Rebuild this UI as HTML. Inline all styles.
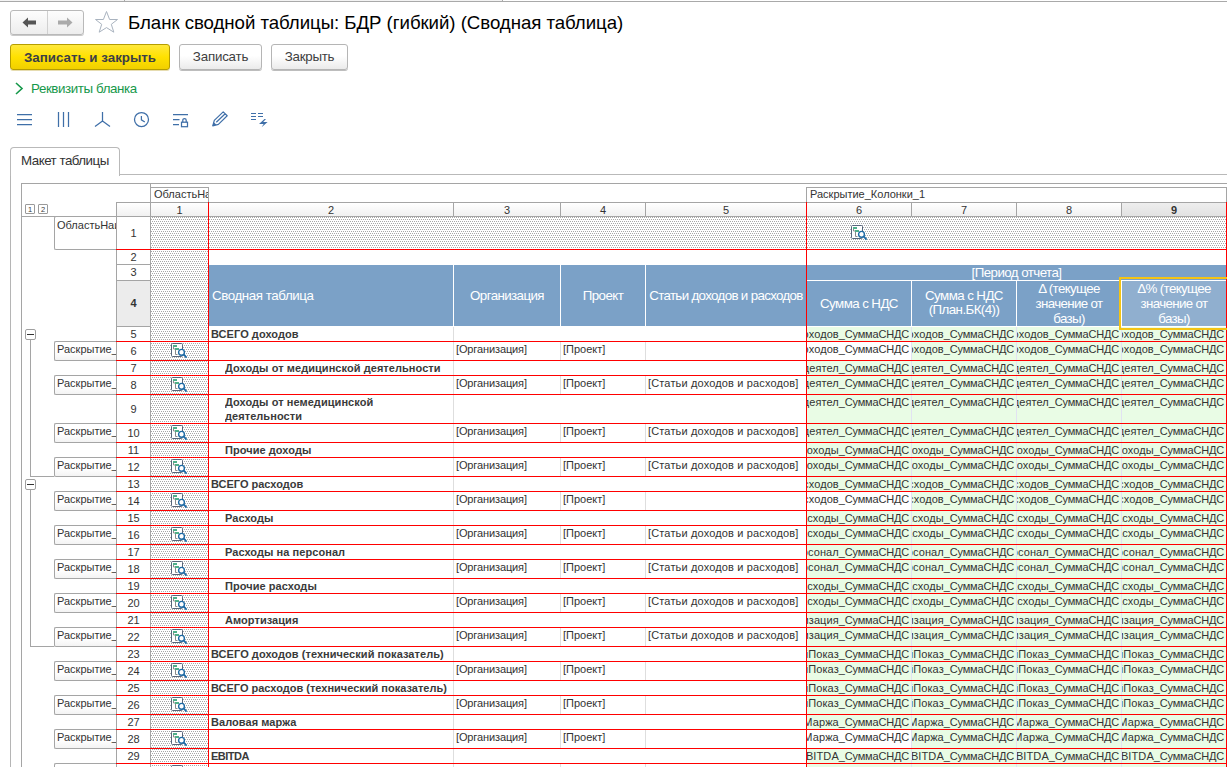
<!DOCTYPE html><html><head><meta charset="utf-8"><style>
html,body{margin:0;padding:0;width:1227px;height:767px;overflow:hidden;background:#fff;}
body{position:relative;font-family:"Liberation Sans", sans-serif;}
.t{position:absolute;white-space:nowrap;overflow:hidden;}
.ab{position:absolute;}
</style></head><body>
<svg class="ab" style="left:0;top:0" width="1227" height="767" shape-rendering="crispEdges"><defs><linearGradient id="hg" x1="0" y1="0" x2="0" y2="1"><stop offset="0" stop-color="#ffffff"/><stop offset="1" stop-color="#f1f1f1"/></linearGradient><linearGradient id="hs" x1="0" y1="0" x2="0" y2="1"><stop offset="0" stop-color="#eeeeee"/><stop offset="1" stop-color="#e2e2e2"/></linearGradient><pattern id="dots" patternUnits="userSpaceOnUse" width="2" height="4"><rect x="0" y="1" width="1" height="1" fill="#a8a8a8"/><rect x="1" y="3" width="1" height="1" fill="#a8a8a8"/></pattern></defs>
<rect x="0" y="0" width="124" height="1" fill="#f3f3f3"/>
<rect x="125" y="0" width="377" height="1" fill="#f3f3f3"/>
<rect x="0" y="1" width="1227" height="1" fill="#a9a9a9"/>
<rect x="124" y="0" width="1" height="1" fill="#a9a9a9"/>
<rect x="502" y="0" width="1" height="1" fill="#a9a9a9"/>
<rect x="151" y="217" width="57" height="550" fill="url(#dots)"/>
<rect x="209" y="217" width="1017" height="32" fill="url(#dots)"/>
<rect x="209" y="265" width="1017" height="61" fill="#7ba1c7"/>
<rect x="453" y="265" width="1" height="61" fill="#ffffff"/>
<rect x="560" y="265" width="1" height="61" fill="#ffffff"/>
<rect x="645" y="265" width="1" height="61" fill="#ffffff"/>
<rect x="807" y="280" width="419" height="1" fill="#ffffff"/>
<rect x="911" y="281" width="1" height="45" fill="#ffffff"/>
<rect x="1016" y="281" width="1" height="45" fill="#ffffff"/>
<rect x="1121" y="281" width="1" height="45" fill="#ffffff"/>
<rect x="1122" y="281" width="104" height="45" fill="#90afcf"/>
<rect x="807" y="327" width="104" height="14" fill="#e9fce5"/>
<rect x="912" y="327" width="104" height="14" fill="#e9fce5"/>
<rect x="1017" y="327" width="104" height="14" fill="#e9fce5"/>
<rect x="1122" y="327" width="104" height="14" fill="#e9fce5"/>
<rect x="912" y="342" width="104" height="18" fill="#e9fce5"/>
<rect x="1017" y="342" width="104" height="18" fill="#e9fce5"/>
<rect x="1122" y="342" width="104" height="18" fill="#e9fce5"/>
<rect x="807" y="361" width="104" height="14" fill="#e9fce5"/>
<rect x="912" y="361" width="104" height="14" fill="#e9fce5"/>
<rect x="1017" y="361" width="104" height="14" fill="#e9fce5"/>
<rect x="1122" y="361" width="104" height="14" fill="#e9fce5"/>
<rect x="807" y="376" width="104" height="18" fill="#e9fce5"/>
<rect x="912" y="376" width="104" height="18" fill="#e9fce5"/>
<rect x="1017" y="376" width="104" height="18" fill="#e9fce5"/>
<rect x="1122" y="376" width="104" height="18" fill="#e9fce5"/>
<rect x="807" y="395" width="104" height="28" fill="#e9fce5"/>
<rect x="912" y="395" width="104" height="28" fill="#e9fce5"/>
<rect x="1017" y="395" width="104" height="28" fill="#e9fce5"/>
<rect x="1122" y="395" width="104" height="28" fill="#e9fce5"/>
<rect x="807" y="424" width="104" height="18" fill="#e9fce5"/>
<rect x="912" y="424" width="104" height="18" fill="#e9fce5"/>
<rect x="1017" y="424" width="104" height="18" fill="#e9fce5"/>
<rect x="1122" y="424" width="104" height="18" fill="#e9fce5"/>
<rect x="807" y="443" width="104" height="14" fill="#e9fce5"/>
<rect x="912" y="443" width="104" height="14" fill="#e9fce5"/>
<rect x="1017" y="443" width="104" height="14" fill="#e9fce5"/>
<rect x="1122" y="443" width="104" height="14" fill="#e9fce5"/>
<rect x="807" y="458" width="104" height="18" fill="#e9fce5"/>
<rect x="912" y="458" width="104" height="18" fill="#e9fce5"/>
<rect x="1017" y="458" width="104" height="18" fill="#e9fce5"/>
<rect x="1122" y="458" width="104" height="18" fill="#e9fce5"/>
<rect x="807" y="477" width="104" height="14" fill="#e9fce5"/>
<rect x="912" y="477" width="104" height="14" fill="#e9fce5"/>
<rect x="1017" y="477" width="104" height="14" fill="#e9fce5"/>
<rect x="1122" y="477" width="104" height="14" fill="#e9fce5"/>
<rect x="912" y="492" width="104" height="18" fill="#e9fce5"/>
<rect x="1017" y="492" width="104" height="18" fill="#e9fce5"/>
<rect x="1122" y="492" width="104" height="18" fill="#e9fce5"/>
<rect x="807" y="511" width="104" height="14" fill="#e9fce5"/>
<rect x="912" y="511" width="104" height="14" fill="#e9fce5"/>
<rect x="1017" y="511" width="104" height="14" fill="#e9fce5"/>
<rect x="1122" y="511" width="104" height="14" fill="#e9fce5"/>
<rect x="807" y="526" width="104" height="18" fill="#e9fce5"/>
<rect x="912" y="526" width="104" height="18" fill="#e9fce5"/>
<rect x="1017" y="526" width="104" height="18" fill="#e9fce5"/>
<rect x="1122" y="526" width="104" height="18" fill="#e9fce5"/>
<rect x="807" y="545" width="104" height="14" fill="#e9fce5"/>
<rect x="912" y="545" width="104" height="14" fill="#e9fce5"/>
<rect x="1017" y="545" width="104" height="14" fill="#e9fce5"/>
<rect x="1122" y="545" width="104" height="14" fill="#e9fce5"/>
<rect x="807" y="560" width="104" height="18" fill="#e9fce5"/>
<rect x="912" y="560" width="104" height="18" fill="#e9fce5"/>
<rect x="1017" y="560" width="104" height="18" fill="#e9fce5"/>
<rect x="1122" y="560" width="104" height="18" fill="#e9fce5"/>
<rect x="807" y="579" width="104" height="14" fill="#e9fce5"/>
<rect x="912" y="579" width="104" height="14" fill="#e9fce5"/>
<rect x="1017" y="579" width="104" height="14" fill="#e9fce5"/>
<rect x="1122" y="579" width="104" height="14" fill="#e9fce5"/>
<rect x="807" y="594" width="104" height="18" fill="#e9fce5"/>
<rect x="912" y="594" width="104" height="18" fill="#e9fce5"/>
<rect x="1017" y="594" width="104" height="18" fill="#e9fce5"/>
<rect x="1122" y="594" width="104" height="18" fill="#e9fce5"/>
<rect x="807" y="613" width="104" height="14" fill="#e9fce5"/>
<rect x="912" y="613" width="104" height="14" fill="#e9fce5"/>
<rect x="1017" y="613" width="104" height="14" fill="#e9fce5"/>
<rect x="1122" y="613" width="104" height="14" fill="#e9fce5"/>
<rect x="807" y="628" width="104" height="18" fill="#e9fce5"/>
<rect x="912" y="628" width="104" height="18" fill="#e9fce5"/>
<rect x="1017" y="628" width="104" height="18" fill="#e9fce5"/>
<rect x="1122" y="628" width="104" height="18" fill="#e9fce5"/>
<rect x="807" y="647" width="104" height="14" fill="#e9fce5"/>
<rect x="912" y="647" width="104" height="14" fill="#e9fce5"/>
<rect x="1017" y="647" width="104" height="14" fill="#e9fce5"/>
<rect x="1122" y="647" width="104" height="14" fill="#e9fce5"/>
<rect x="807" y="662" width="104" height="18" fill="#e9fce5"/>
<rect x="912" y="662" width="104" height="18" fill="#e9fce5"/>
<rect x="1017" y="662" width="104" height="18" fill="#e9fce5"/>
<rect x="1122" y="662" width="104" height="18" fill="#e9fce5"/>
<rect x="807" y="681" width="104" height="14" fill="#e9fce5"/>
<rect x="912" y="681" width="104" height="14" fill="#e9fce5"/>
<rect x="1017" y="681" width="104" height="14" fill="#e9fce5"/>
<rect x="1122" y="681" width="104" height="14" fill="#e9fce5"/>
<rect x="807" y="696" width="104" height="18" fill="#e9fce5"/>
<rect x="912" y="696" width="104" height="18" fill="#e9fce5"/>
<rect x="1017" y="696" width="104" height="18" fill="#e9fce5"/>
<rect x="1122" y="696" width="104" height="18" fill="#e9fce5"/>
<rect x="807" y="715" width="104" height="14" fill="#e9fce5"/>
<rect x="912" y="715" width="104" height="14" fill="#e9fce5"/>
<rect x="1017" y="715" width="104" height="14" fill="#e9fce5"/>
<rect x="1122" y="715" width="104" height="14" fill="#e9fce5"/>
<rect x="912" y="730" width="104" height="18" fill="#e9fce5"/>
<rect x="1017" y="730" width="104" height="18" fill="#e9fce5"/>
<rect x="1122" y="730" width="104" height="18" fill="#e9fce5"/>
<rect x="807" y="749" width="104" height="14" fill="#e9fce5"/>
<rect x="912" y="749" width="104" height="14" fill="#e9fce5"/>
<rect x="1017" y="749" width="104" height="14" fill="#e9fce5"/>
<rect x="1122" y="749" width="104" height="14" fill="#e9fce5"/>
<rect x="807" y="764" width="104" height="18" fill="#e9fce5"/>
<rect x="912" y="764" width="104" height="18" fill="#e9fce5"/>
<rect x="1017" y="764" width="104" height="18" fill="#e9fce5"/>
<rect x="1122" y="764" width="104" height="18" fill="#e9fce5"/>
<rect x="453" y="327" width="1" height="14" fill="#dedede"/>
<rect x="911" y="327" width="1" height="14" fill="#e2e2f2"/>
<rect x="1016" y="327" width="1" height="14" fill="#e2e2f2"/>
<rect x="1121" y="327" width="1" height="14" fill="#e2e2f2"/>
<rect x="453" y="342" width="1" height="18" fill="#dedede"/>
<rect x="560" y="342" width="1" height="18" fill="#dedede"/>
<rect x="645" y="342" width="1" height="18" fill="#dedede"/>
<rect x="911" y="342" width="1" height="18" fill="#e2e2f2"/>
<rect x="1016" y="342" width="1" height="18" fill="#e2e2f2"/>
<rect x="1121" y="342" width="1" height="18" fill="#e2e2f2"/>
<rect x="453" y="361" width="1" height="14" fill="#dedede"/>
<rect x="911" y="361" width="1" height="14" fill="#e2e2f2"/>
<rect x="1016" y="361" width="1" height="14" fill="#e2e2f2"/>
<rect x="1121" y="361" width="1" height="14" fill="#e2e2f2"/>
<rect x="453" y="376" width="1" height="18" fill="#dedede"/>
<rect x="560" y="376" width="1" height="18" fill="#dedede"/>
<rect x="645" y="376" width="1" height="18" fill="#dedede"/>
<rect x="911" y="376" width="1" height="18" fill="#e2e2f2"/>
<rect x="1016" y="376" width="1" height="18" fill="#e2e2f2"/>
<rect x="1121" y="376" width="1" height="18" fill="#e2e2f2"/>
<rect x="453" y="395" width="1" height="28" fill="#dedede"/>
<rect x="911" y="395" width="1" height="28" fill="#e2e2f2"/>
<rect x="1016" y="395" width="1" height="28" fill="#e2e2f2"/>
<rect x="1121" y="395" width="1" height="28" fill="#e2e2f2"/>
<rect x="453" y="424" width="1" height="18" fill="#dedede"/>
<rect x="560" y="424" width="1" height="18" fill="#dedede"/>
<rect x="645" y="424" width="1" height="18" fill="#dedede"/>
<rect x="911" y="424" width="1" height="18" fill="#e2e2f2"/>
<rect x="1016" y="424" width="1" height="18" fill="#e2e2f2"/>
<rect x="1121" y="424" width="1" height="18" fill="#e2e2f2"/>
<rect x="453" y="443" width="1" height="14" fill="#dedede"/>
<rect x="911" y="443" width="1" height="14" fill="#e2e2f2"/>
<rect x="1016" y="443" width="1" height="14" fill="#e2e2f2"/>
<rect x="1121" y="443" width="1" height="14" fill="#e2e2f2"/>
<rect x="453" y="458" width="1" height="18" fill="#dedede"/>
<rect x="560" y="458" width="1" height="18" fill="#dedede"/>
<rect x="645" y="458" width="1" height="18" fill="#dedede"/>
<rect x="911" y="458" width="1" height="18" fill="#e2e2f2"/>
<rect x="1016" y="458" width="1" height="18" fill="#e2e2f2"/>
<rect x="1121" y="458" width="1" height="18" fill="#e2e2f2"/>
<rect x="453" y="477" width="1" height="14" fill="#dedede"/>
<rect x="911" y="477" width="1" height="14" fill="#e2e2f2"/>
<rect x="1016" y="477" width="1" height="14" fill="#e2e2f2"/>
<rect x="1121" y="477" width="1" height="14" fill="#e2e2f2"/>
<rect x="453" y="492" width="1" height="18" fill="#dedede"/>
<rect x="560" y="492" width="1" height="18" fill="#dedede"/>
<rect x="645" y="492" width="1" height="18" fill="#dedede"/>
<rect x="911" y="492" width="1" height="18" fill="#e2e2f2"/>
<rect x="1016" y="492" width="1" height="18" fill="#e2e2f2"/>
<rect x="1121" y="492" width="1" height="18" fill="#e2e2f2"/>
<rect x="453" y="511" width="1" height="14" fill="#dedede"/>
<rect x="911" y="511" width="1" height="14" fill="#e2e2f2"/>
<rect x="1016" y="511" width="1" height="14" fill="#e2e2f2"/>
<rect x="1121" y="511" width="1" height="14" fill="#e2e2f2"/>
<rect x="453" y="526" width="1" height="18" fill="#dedede"/>
<rect x="560" y="526" width="1" height="18" fill="#dedede"/>
<rect x="645" y="526" width="1" height="18" fill="#dedede"/>
<rect x="911" y="526" width="1" height="18" fill="#e2e2f2"/>
<rect x="1016" y="526" width="1" height="18" fill="#e2e2f2"/>
<rect x="1121" y="526" width="1" height="18" fill="#e2e2f2"/>
<rect x="453" y="545" width="1" height="14" fill="#dedede"/>
<rect x="911" y="545" width="1" height="14" fill="#e2e2f2"/>
<rect x="1016" y="545" width="1" height="14" fill="#e2e2f2"/>
<rect x="1121" y="545" width="1" height="14" fill="#e2e2f2"/>
<rect x="453" y="560" width="1" height="18" fill="#dedede"/>
<rect x="560" y="560" width="1" height="18" fill="#dedede"/>
<rect x="645" y="560" width="1" height="18" fill="#dedede"/>
<rect x="911" y="560" width="1" height="18" fill="#e2e2f2"/>
<rect x="1016" y="560" width="1" height="18" fill="#e2e2f2"/>
<rect x="1121" y="560" width="1" height="18" fill="#e2e2f2"/>
<rect x="453" y="579" width="1" height="14" fill="#dedede"/>
<rect x="911" y="579" width="1" height="14" fill="#e2e2f2"/>
<rect x="1016" y="579" width="1" height="14" fill="#e2e2f2"/>
<rect x="1121" y="579" width="1" height="14" fill="#e2e2f2"/>
<rect x="453" y="594" width="1" height="18" fill="#dedede"/>
<rect x="560" y="594" width="1" height="18" fill="#dedede"/>
<rect x="645" y="594" width="1" height="18" fill="#dedede"/>
<rect x="911" y="594" width="1" height="18" fill="#e2e2f2"/>
<rect x="1016" y="594" width="1" height="18" fill="#e2e2f2"/>
<rect x="1121" y="594" width="1" height="18" fill="#e2e2f2"/>
<rect x="453" y="613" width="1" height="14" fill="#dedede"/>
<rect x="911" y="613" width="1" height="14" fill="#e2e2f2"/>
<rect x="1016" y="613" width="1" height="14" fill="#e2e2f2"/>
<rect x="1121" y="613" width="1" height="14" fill="#e2e2f2"/>
<rect x="453" y="628" width="1" height="18" fill="#dedede"/>
<rect x="560" y="628" width="1" height="18" fill="#dedede"/>
<rect x="645" y="628" width="1" height="18" fill="#dedede"/>
<rect x="911" y="628" width="1" height="18" fill="#e2e2f2"/>
<rect x="1016" y="628" width="1" height="18" fill="#e2e2f2"/>
<rect x="1121" y="628" width="1" height="18" fill="#e2e2f2"/>
<rect x="453" y="647" width="1" height="14" fill="#dedede"/>
<rect x="911" y="647" width="1" height="14" fill="#e2e2f2"/>
<rect x="1016" y="647" width="1" height="14" fill="#e2e2f2"/>
<rect x="1121" y="647" width="1" height="14" fill="#e2e2f2"/>
<rect x="453" y="662" width="1" height="18" fill="#dedede"/>
<rect x="560" y="662" width="1" height="18" fill="#dedede"/>
<rect x="645" y="662" width="1" height="18" fill="#dedede"/>
<rect x="911" y="662" width="1" height="18" fill="#e2e2f2"/>
<rect x="1016" y="662" width="1" height="18" fill="#e2e2f2"/>
<rect x="1121" y="662" width="1" height="18" fill="#e2e2f2"/>
<rect x="453" y="681" width="1" height="14" fill="#dedede"/>
<rect x="911" y="681" width="1" height="14" fill="#e2e2f2"/>
<rect x="1016" y="681" width="1" height="14" fill="#e2e2f2"/>
<rect x="1121" y="681" width="1" height="14" fill="#e2e2f2"/>
<rect x="453" y="696" width="1" height="18" fill="#dedede"/>
<rect x="560" y="696" width="1" height="18" fill="#dedede"/>
<rect x="645" y="696" width="1" height="18" fill="#dedede"/>
<rect x="911" y="696" width="1" height="18" fill="#e2e2f2"/>
<rect x="1016" y="696" width="1" height="18" fill="#e2e2f2"/>
<rect x="1121" y="696" width="1" height="18" fill="#e2e2f2"/>
<rect x="453" y="715" width="1" height="14" fill="#dedede"/>
<rect x="911" y="715" width="1" height="14" fill="#e2e2f2"/>
<rect x="1016" y="715" width="1" height="14" fill="#e2e2f2"/>
<rect x="1121" y="715" width="1" height="14" fill="#e2e2f2"/>
<rect x="453" y="730" width="1" height="18" fill="#dedede"/>
<rect x="560" y="730" width="1" height="18" fill="#dedede"/>
<rect x="645" y="730" width="1" height="18" fill="#dedede"/>
<rect x="911" y="730" width="1" height="18" fill="#e2e2f2"/>
<rect x="1016" y="730" width="1" height="18" fill="#e2e2f2"/>
<rect x="1121" y="730" width="1" height="18" fill="#e2e2f2"/>
<rect x="453" y="749" width="1" height="14" fill="#dedede"/>
<rect x="911" y="749" width="1" height="14" fill="#e2e2f2"/>
<rect x="1016" y="749" width="1" height="14" fill="#e2e2f2"/>
<rect x="1121" y="749" width="1" height="14" fill="#e2e2f2"/>
<rect x="453" y="764" width="1" height="18" fill="#dedede"/>
<rect x="560" y="764" width="1" height="18" fill="#dedede"/>
<rect x="645" y="764" width="1" height="18" fill="#dedede"/>
<rect x="911" y="764" width="1" height="18" fill="#e2e2f2"/>
<rect x="1016" y="764" width="1" height="18" fill="#e2e2f2"/>
<rect x="1121" y="764" width="1" height="18" fill="#e2e2f2"/>
<rect x="117" y="203" width="1109" height="13" fill="url(#hg)"/>
<rect x="1122" y="203" width="104" height="13" fill="url(#hs)"/>
<rect x="116" y="202" width="1110" height="1" fill="#a5a5a5"/>
<rect x="21" y="216" width="1205" height="1" fill="#a5a5a5"/>
<rect x="116" y="202" width="1" height="15" fill="#a5a5a5"/>
<rect x="150" y="202" width="1" height="15" fill="#a5a5a5"/>
<rect x="208" y="202" width="1" height="15" fill="#a5a5a5"/>
<rect x="453" y="202" width="1" height="15" fill="#a5a5a5"/>
<rect x="560" y="202" width="1" height="15" fill="#a5a5a5"/>
<rect x="645" y="202" width="1" height="15" fill="#a5a5a5"/>
<rect x="806" y="202" width="1" height="15" fill="#a5a5a5"/>
<rect x="911" y="202" width="1" height="15" fill="#a5a5a5"/>
<rect x="1016" y="202" width="1" height="15" fill="#a5a5a5"/>
<rect x="1121" y="202" width="1" height="15" fill="#a5a5a5"/>
<rect x="1226" y="187" width="1" height="15" fill="#a5a5a5"/>
<rect x="117" y="281" width="33" height="45" fill="#ececec"/>
<rect x="116" y="202" width="1" height="565" fill="#a5a5a5"/>
<rect x="150" y="183" width="1" height="584" fill="#a5a5a5"/>
<rect x="116" y="249" width="34" height="1" fill="#a5a5a5"/>
<rect x="116" y="264" width="34" height="1" fill="#a5a5a5"/>
<rect x="116" y="280" width="34" height="1" fill="#a5a5a5"/>
<rect x="116" y="326" width="34" height="1" fill="#a5a5a5"/>
<rect x="116" y="341" width="34" height="1" fill="#a5a5a5"/>
<rect x="116" y="360" width="34" height="1" fill="#a5a5a5"/>
<rect x="116" y="375" width="34" height="1" fill="#a5a5a5"/>
<rect x="116" y="394" width="34" height="1" fill="#a5a5a5"/>
<rect x="116" y="423" width="34" height="1" fill="#a5a5a5"/>
<rect x="116" y="442" width="34" height="1" fill="#a5a5a5"/>
<rect x="116" y="457" width="34" height="1" fill="#a5a5a5"/>
<rect x="116" y="476" width="34" height="1" fill="#a5a5a5"/>
<rect x="116" y="491" width="34" height="1" fill="#a5a5a5"/>
<rect x="116" y="510" width="34" height="1" fill="#a5a5a5"/>
<rect x="116" y="525" width="34" height="1" fill="#a5a5a5"/>
<rect x="116" y="544" width="34" height="1" fill="#a5a5a5"/>
<rect x="116" y="559" width="34" height="1" fill="#a5a5a5"/>
<rect x="116" y="578" width="34" height="1" fill="#a5a5a5"/>
<rect x="116" y="593" width="34" height="1" fill="#a5a5a5"/>
<rect x="116" y="612" width="34" height="1" fill="#a5a5a5"/>
<rect x="116" y="627" width="34" height="1" fill="#a5a5a5"/>
<rect x="116" y="646" width="34" height="1" fill="#a5a5a5"/>
<rect x="116" y="661" width="34" height="1" fill="#a5a5a5"/>
<rect x="116" y="680" width="34" height="1" fill="#a5a5a5"/>
<rect x="116" y="695" width="34" height="1" fill="#a5a5a5"/>
<rect x="116" y="714" width="34" height="1" fill="#a5a5a5"/>
<rect x="116" y="729" width="34" height="1" fill="#a5a5a5"/>
<rect x="116" y="748" width="34" height="1" fill="#a5a5a5"/>
<rect x="116" y="763" width="34" height="1" fill="#a5a5a5"/>
<rect x="116" y="782" width="34" height="1" fill="#a5a5a5"/>
<rect x="21" y="183" width="1206" height="1" fill="#a5a5a5"/>
<rect x="150" y="187" width="59" height="1" fill="#a5a5a5"/>
<rect x="208" y="187" width="1" height="15" fill="#a5a5a5"/>
<rect x="806" y="187" width="421" height="1" fill="#a5a5a5"/>
<rect x="806" y="187" width="1" height="15" fill="#a5a5a5"/>
<rect x="21" y="183" width="1" height="584" fill="#a5a5a5"/>
<rect x="10" y="160" width="1" height="607" fill="#b5b5b5"/>
<rect x="208" y="202" width="1" height="565" fill="#ff0000"/>
<rect x="806" y="202" width="1" height="565" fill="#ff0000"/>
<rect x="1226" y="202" width="1" height="565" fill="#ff0000"/>
<rect x="116" y="249" width="1111" height="1" fill="#ff0000"/>
<rect x="116" y="341" width="1111" height="1" fill="#ff0000"/>
<rect x="116" y="360" width="1111" height="1" fill="#ff0000"/>
<rect x="116" y="375" width="1111" height="1" fill="#ff0000"/>
<rect x="116" y="394" width="1111" height="1" fill="#ff0000"/>
<rect x="116" y="423" width="1111" height="1" fill="#ff0000"/>
<rect x="116" y="442" width="1111" height="1" fill="#ff0000"/>
<rect x="116" y="457" width="1111" height="1" fill="#ff0000"/>
<rect x="116" y="476" width="1111" height="1" fill="#ff0000"/>
<rect x="116" y="491" width="1111" height="1" fill="#ff0000"/>
<rect x="116" y="510" width="1111" height="1" fill="#ff0000"/>
<rect x="116" y="525" width="1111" height="1" fill="#ff0000"/>
<rect x="116" y="544" width="1111" height="1" fill="#ff0000"/>
<rect x="116" y="559" width="1111" height="1" fill="#ff0000"/>
<rect x="116" y="578" width="1111" height="1" fill="#ff0000"/>
<rect x="116" y="593" width="1111" height="1" fill="#ff0000"/>
<rect x="116" y="612" width="1111" height="1" fill="#ff0000"/>
<rect x="116" y="627" width="1111" height="1" fill="#ff0000"/>
<rect x="116" y="646" width="1111" height="1" fill="#ff0000"/>
<rect x="116" y="661" width="1111" height="1" fill="#ff0000"/>
<rect x="116" y="680" width="1111" height="1" fill="#ff0000"/>
<rect x="116" y="695" width="1111" height="1" fill="#ff0000"/>
<rect x="116" y="714" width="1111" height="1" fill="#ff0000"/>
<rect x="116" y="729" width="1111" height="1" fill="#ff0000"/>
<rect x="116" y="748" width="1111" height="1" fill="#ff0000"/>
<rect x="116" y="763" width="1111" height="1" fill="#ff0000"/>
<rect x="116" y="782" width="1111" height="1" fill="#ff0000"/>
<rect x="30" y="340" width="1" height="136" fill="#a5a5a5"/>
<rect x="30" y="476" width="24" height="1" fill="#a5a5a5"/>
<rect x="30" y="490" width="1" height="156" fill="#a5a5a5"/>
<rect x="30" y="646" width="24" height="1" fill="#a5a5a5"/>
</svg>
<div class="ab" style="left:54px;top:216px;width:61px;height:32px;border:1px solid #a5a5a5;border-right:none;border-radius:2px 0 0 2px;background:#fff"></div>
<div class="ab" style="left:54px;top:341px;width:61px;height:18px;border:1px solid #a5a5a5;border-right:none;border-radius:2px 0 0 2px;background:linear-gradient(#fff 55%,#f3f3f3)"></div>
<div class="ab" style="left:54px;top:375px;width:61px;height:18px;border:1px solid #a5a5a5;border-right:none;border-radius:2px 0 0 2px;background:linear-gradient(#fff 55%,#f3f3f3)"></div>
<div class="ab" style="left:54px;top:423px;width:61px;height:18px;border:1px solid #a5a5a5;border-right:none;border-radius:2px 0 0 2px;background:linear-gradient(#fff 55%,#f3f3f3)"></div>
<div class="ab" style="left:54px;top:457px;width:61px;height:18px;border:1px solid #a5a5a5;border-right:none;border-radius:2px 0 0 2px;background:linear-gradient(#fff 55%,#f3f3f3)"></div>
<div class="ab" style="left:54px;top:491px;width:61px;height:18px;border:1px solid #a5a5a5;border-right:none;border-radius:2px 0 0 2px;background:linear-gradient(#fff 55%,#f3f3f3)"></div>
<div class="ab" style="left:54px;top:525px;width:61px;height:18px;border:1px solid #a5a5a5;border-right:none;border-radius:2px 0 0 2px;background:linear-gradient(#fff 55%,#f3f3f3)"></div>
<div class="ab" style="left:54px;top:559px;width:61px;height:18px;border:1px solid #a5a5a5;border-right:none;border-radius:2px 0 0 2px;background:linear-gradient(#fff 55%,#f3f3f3)"></div>
<div class="ab" style="left:54px;top:593px;width:61px;height:18px;border:1px solid #a5a5a5;border-right:none;border-radius:2px 0 0 2px;background:linear-gradient(#fff 55%,#f3f3f3)"></div>
<div class="ab" style="left:54px;top:627px;width:61px;height:18px;border:1px solid #a5a5a5;border-right:none;border-radius:2px 0 0 2px;background:linear-gradient(#fff 55%,#f3f3f3)"></div>
<div class="ab" style="left:54px;top:661px;width:61px;height:18px;border:1px solid #a5a5a5;border-right:none;border-radius:2px 0 0 2px;background:linear-gradient(#fff 55%,#f3f3f3)"></div>
<div class="ab" style="left:54px;top:695px;width:61px;height:18px;border:1px solid #a5a5a5;border-right:none;border-radius:2px 0 0 2px;background:linear-gradient(#fff 55%,#f3f3f3)"></div>
<div class="ab" style="left:54px;top:729px;width:61px;height:18px;border:1px solid #a5a5a5;border-right:none;border-radius:2px 0 0 2px;background:linear-gradient(#fff 55%,#f3f3f3)"></div>
<div class="ab" style="left:54px;top:763px;width:61px;height:18px;border:1px solid #a5a5a5;border-right:none;border-radius:2px 0 0 2px;background:linear-gradient(#fff 55%,#f3f3f3)"></div>
<div class="ab" style="left:10px;top:10px;width:72px;height:23px;border:1px solid #b9b9b9;border-radius:3px;background:linear-gradient(#fdfdfd,#ededed);box-shadow:0 1px 0 #c9c9c9"></div>
<div class="ab" style="left:47px;top:11px;width:1px;height:23px;background:#d0d0d0"></div>
<svg class="ab" style="left:20px;top:14px" width="20" height="16"><path d="M2.5 8.5 L8 3.5 L8 6.5 L16 6.5 L16 10.5 L8 10.5 L8 13.5 Z" fill="#555"/></svg>
<svg class="ab" style="left:55px;top:14px" width="20" height="16"><path d="M17.5 8.5 L12 3.5 L12 6.5 L3 6.5 L3 10.5 L12 10.5 L12 13.5 Z" fill="#aaa"/></svg>
<svg class="ab" style="left:94px;top:10px" width="26" height="24"><path d="M12.5 1.5 L15.6 9.5 L23.5 9.5 L17.3 14.3 L19.8 22.2 L12.5 17.6 L5.2 22.2 L7.7 14.3 L1.5 9.5 L9.4 9.5 Z" fill="none" stroke="#a9b3bf" stroke-width="1"/></svg>
<div class="t" style="left:128px;top:11px;width:520px;height:24px;font-size:18.67px;line-height:24px;color:#000;font-weight:400;text-align:left;letter-spacing:-0.05px;">Бланк сводной таблицы: БДР (гибкий) (Сводная таблица)</div>
<div class="ab" style="left:10px;top:44px;width:158px;height:24px;border:1px solid #b59d00;border-radius:3px;background:linear-gradient(#ffe83c,#ffe100 50%,#f1d000);box-shadow:0 1px 0 #e6dcb0"></div>
<div class="t" style="left:11px;top:46px;width:158px;height:24px;font-size:13.33px;line-height:24px;color:#3b3e48;font-weight:700;text-align:center;letter-spacing:0px;">Записать и закрыть</div>
<div class="ab" style="left:179px;top:44px;width:81px;height:24px;border:1px solid #b5b5b5;border-radius:3px;background:linear-gradient(#ffffff 45%,#ebebeb);box-shadow:0 1px 0 #bdbdbd"></div>
<div class="t" style="left:180px;top:45px;width:81px;height:24px;font-size:13.33px;line-height:24px;color:#404040;font-weight:400;text-align:center;letter-spacing:-0.2px;">Записать</div>
<div class="ab" style="left:271px;top:44px;width:75px;height:24px;border:1px solid #b5b5b5;border-radius:3px;background:linear-gradient(#ffffff 45%,#ebebeb);box-shadow:0 1px 0 #bdbdbd"></div>
<div class="t" style="left:272px;top:45px;width:75px;height:24px;font-size:13.33px;line-height:24px;color:#404040;font-weight:400;text-align:center;letter-spacing:-0.25px;">Закрыть</div>
<svg class="ab" style="left:13px;top:81px" width="12" height="15"><path d="M3 2 L9 7.5 L3 13" fill="none" stroke="#16984a" stroke-width="1.6"/></svg>
<div class="t" style="left:31px;top:80px;width:130px;height:17px;font-size:13.33px;line-height:17px;color:#16984a;font-weight:400;text-align:left;letter-spacing:-0.4px;">Реквизиты бланка</div>
<svg class="ab" style="left:0;top:100px" width="300" height="40" fill="none" stroke="#3f6fa8" stroke-width="1.25"><path d="M17 14.5 H32 M17 19.5 H32 M17 24.5 H32"/><path d="M58.5 12 V27 M63.5 12 V27 M68.5 12 V27"/><path d="M102.5 12 V21 M102.5 21 L95 26.5 M102.5 21 L110 26.5"/><circle cx="141.5" cy="19.5" r="7"/><path d="M141.4 16 V19.8 L144.8 22"/><path d="M173 14.5 H188 M173 19.5 H179.5 M173 24.5 H179"/><rect x="181.5" y="22.2" width="6" height="4.5"/><path d="M182.8 22.2 V20.2 A1.7 1.7 0 0 1 186.2 20.2 V22.2"/><path d="M212.8 25.8 L214.3 20.4 L223.2 11.9 L227.2 15.8 L218.4 24.4 Z M216.3 22.3 L225.2 13.8" stroke-width="1.2" stroke-linejoin="round"/><path d="M212.5 26 L213.6 22 L216.5 24.8 Z" fill="#3f6fa8" stroke="none"/><path d="M251 13.5 H256 M258 13.5 H263 M251 16.5 H256 M258 16.5 H263 M251 19.5 H256" stroke-width="1.1"/><path d="M264.5 119 L259 124 L263.6 124 L261.6 127.3 L267.6 122 L263.2 122 L266 119 Z" transform="translate(0,-100)" fill="#3f6fa8" stroke="none"/></svg>
<div class="ab" style="left:10px;top:147px;width:108px;height:28px;border:1px solid #b9b9b9;border-bottom:none;border-radius:4px 4px 0 0;background:#fff"></div>
<div class="ab" style="left:119px;top:174px;width:1108px;height:1px;background:#b9b9b9"></div>
<div class="t" style="left:21px;top:152px;width:97px;height:18px;font-size:13.33px;line-height:18px;color:#333;font-weight:400;text-align:left;letter-spacing:-0.5px;">Макет таблицы</div>
<div class="t" style="left:154px;top:187px;width:54px;height:14px;font-size:11px;line-height:14px;color:#333;font-weight:400;text-align:left;letter-spacing:0px;">ОбластьНаименованиеСтрок</div>
<div class="t" style="left:810px;top:187px;width:416px;height:14px;font-size:11px;line-height:14px;color:#333;font-weight:400;text-align:left;letter-spacing:0px;">Раскрытие_Колонки_1</div>
<div class="t" style="left:151px;top:204px;width:57px;height:13px;font-size:11px;line-height:13px;color:#333;font-weight:400;text-align:center;letter-spacing:0px;">1</div>
<div class="t" style="left:209px;top:204px;width:244px;height:13px;font-size:11px;line-height:13px;color:#333;font-weight:400;text-align:center;letter-spacing:0px;">2</div>
<div class="t" style="left:454px;top:204px;width:106px;height:13px;font-size:11px;line-height:13px;color:#333;font-weight:400;text-align:center;letter-spacing:0px;">3</div>
<div class="t" style="left:561px;top:204px;width:84px;height:13px;font-size:11px;line-height:13px;color:#333;font-weight:400;text-align:center;letter-spacing:0px;">4</div>
<div class="t" style="left:646px;top:204px;width:160px;height:13px;font-size:11px;line-height:13px;color:#333;font-weight:400;text-align:center;letter-spacing:0px;">5</div>
<div class="t" style="left:807px;top:204px;width:104px;height:13px;font-size:11px;line-height:13px;color:#333;font-weight:400;text-align:center;letter-spacing:0px;">6</div>
<div class="t" style="left:912px;top:204px;width:104px;height:13px;font-size:11px;line-height:13px;color:#333;font-weight:400;text-align:center;letter-spacing:0px;">7</div>
<div class="t" style="left:1017px;top:204px;width:104px;height:13px;font-size:11px;line-height:13px;color:#333;font-weight:400;text-align:center;letter-spacing:0px;">8</div>
<div class="t" style="left:1122px;top:204px;width:104px;height:13px;font-size:11px;line-height:13px;color:#333;font-weight:700;text-align:center;letter-spacing:0px;">9</div>
<div class="t" style="left:57px;top:218px;width:59px;height:16px;font-size:11px;line-height:14px;color:#333;font-weight:400;text-align:left;letter-spacing:0px;">ОбластьНаименованиеСтрок</div>
<div class="t" style="left:117px;top:217px;width:33px;height:32px;font-size:11px;line-height:32px;color:#333;font-weight:400;text-align:center;letter-spacing:0px;">1</div>
<div class="t" style="left:117px;top:250px;width:33px;height:14px;font-size:11px;line-height:14px;color:#333;font-weight:400;text-align:center;letter-spacing:0px;">2</div>
<div class="t" style="left:117px;top:265px;width:33px;height:15px;font-size:11px;line-height:15px;color:#333;font-weight:400;text-align:center;letter-spacing:0px;">3</div>
<div class="t" style="left:117px;top:281px;width:33px;height:45px;font-size:11px;line-height:45px;color:#333;font-weight:700;text-align:center;letter-spacing:0px;">4</div>
<div class="t" style="left:117px;top:327px;width:33px;height:14px;font-size:11px;line-height:14px;color:#333;font-weight:400;text-align:center;letter-spacing:0px;">5</div>
<div class="t" style="left:117px;top:342px;width:33px;height:18px;font-size:11px;line-height:18px;color:#333;font-weight:400;text-align:center;letter-spacing:0px;">6</div>
<div class="t" style="left:117px;top:361px;width:33px;height:14px;font-size:11px;line-height:14px;color:#333;font-weight:400;text-align:center;letter-spacing:0px;">7</div>
<div class="t" style="left:117px;top:376px;width:33px;height:18px;font-size:11px;line-height:18px;color:#333;font-weight:400;text-align:center;letter-spacing:0px;">8</div>
<div class="t" style="left:117px;top:395px;width:33px;height:28px;font-size:11px;line-height:28px;color:#333;font-weight:400;text-align:center;letter-spacing:0px;">9</div>
<div class="t" style="left:117px;top:424px;width:33px;height:18px;font-size:11px;line-height:18px;color:#333;font-weight:400;text-align:center;letter-spacing:0px;">10</div>
<div class="t" style="left:117px;top:443px;width:33px;height:14px;font-size:11px;line-height:14px;color:#333;font-weight:400;text-align:center;letter-spacing:0px;">11</div>
<div class="t" style="left:117px;top:458px;width:33px;height:18px;font-size:11px;line-height:18px;color:#333;font-weight:400;text-align:center;letter-spacing:0px;">12</div>
<div class="t" style="left:117px;top:477px;width:33px;height:14px;font-size:11px;line-height:14px;color:#333;font-weight:400;text-align:center;letter-spacing:0px;">13</div>
<div class="t" style="left:117px;top:492px;width:33px;height:18px;font-size:11px;line-height:18px;color:#333;font-weight:400;text-align:center;letter-spacing:0px;">14</div>
<div class="t" style="left:117px;top:511px;width:33px;height:14px;font-size:11px;line-height:14px;color:#333;font-weight:400;text-align:center;letter-spacing:0px;">15</div>
<div class="t" style="left:117px;top:526px;width:33px;height:18px;font-size:11px;line-height:18px;color:#333;font-weight:400;text-align:center;letter-spacing:0px;">16</div>
<div class="t" style="left:117px;top:545px;width:33px;height:14px;font-size:11px;line-height:14px;color:#333;font-weight:400;text-align:center;letter-spacing:0px;">17</div>
<div class="t" style="left:117px;top:560px;width:33px;height:18px;font-size:11px;line-height:18px;color:#333;font-weight:400;text-align:center;letter-spacing:0px;">18</div>
<div class="t" style="left:117px;top:579px;width:33px;height:14px;font-size:11px;line-height:14px;color:#333;font-weight:400;text-align:center;letter-spacing:0px;">19</div>
<div class="t" style="left:117px;top:594px;width:33px;height:18px;font-size:11px;line-height:18px;color:#333;font-weight:400;text-align:center;letter-spacing:0px;">20</div>
<div class="t" style="left:117px;top:613px;width:33px;height:14px;font-size:11px;line-height:14px;color:#333;font-weight:400;text-align:center;letter-spacing:0px;">21</div>
<div class="t" style="left:117px;top:628px;width:33px;height:18px;font-size:11px;line-height:18px;color:#333;font-weight:400;text-align:center;letter-spacing:0px;">22</div>
<div class="t" style="left:117px;top:647px;width:33px;height:14px;font-size:11px;line-height:14px;color:#333;font-weight:400;text-align:center;letter-spacing:0px;">23</div>
<div class="t" style="left:117px;top:662px;width:33px;height:18px;font-size:11px;line-height:18px;color:#333;font-weight:400;text-align:center;letter-spacing:0px;">24</div>
<div class="t" style="left:117px;top:681px;width:33px;height:14px;font-size:11px;line-height:14px;color:#333;font-weight:400;text-align:center;letter-spacing:0px;">25</div>
<div class="t" style="left:117px;top:696px;width:33px;height:18px;font-size:11px;line-height:18px;color:#333;font-weight:400;text-align:center;letter-spacing:0px;">26</div>
<div class="t" style="left:117px;top:715px;width:33px;height:14px;font-size:11px;line-height:14px;color:#333;font-weight:400;text-align:center;letter-spacing:0px;">27</div>
<div class="t" style="left:117px;top:730px;width:33px;height:18px;font-size:11px;line-height:18px;color:#333;font-weight:400;text-align:center;letter-spacing:0px;">28</div>
<div class="t" style="left:117px;top:749px;width:33px;height:14px;font-size:11px;line-height:14px;color:#333;font-weight:400;text-align:center;letter-spacing:0px;">29</div>
<div class="t" style="left:117px;top:764px;width:33px;height:18px;font-size:11px;line-height:18px;color:#333;font-weight:400;text-align:center;letter-spacing:0px;">30</div>
<div class="ab" style="left:25px;top:204px;width:8px;height:8px;border:1px solid #9a9a9a;border-radius:1px"></div>
<div class="ab" style="left:38px;top:204px;width:8px;height:8px;border:1px solid #9a9a9a;border-radius:1px"></div>
<div class="t" style="left:25px;top:205px;width:10px;height:10px;font-size:7.5px;line-height:10px;color:#3a3a3a;font-weight:400;text-align:center;letter-spacing:0px;">1</div>
<div class="t" style="left:38px;top:205px;width:10px;height:10px;font-size:7.5px;line-height:10px;color:#3a3a3a;font-weight:400;text-align:center;letter-spacing:0px;">2</div>
<div class="ab" style="left:25px;top:329px;width:9px;height:9px;border:1px solid #a0a0a0;border-radius:2px;background:#fff"></div>
<div class="ab" style="left:27px;top:334px;width:7px;height:1px;background:#333"></div>
<div class="ab" style="left:25px;top:479px;width:9px;height:9px;border:1px solid #a0a0a0;border-radius:2px;background:#fff"></div>
<div class="ab" style="left:27px;top:484px;width:7px;height:1px;background:#333"></div>
<div class="t" style="left:57px;top:342px;width:59px;height:18px;font-size:11px;line-height:14px;color:#333;font-weight:400;text-align:left;letter-spacing:0px;">Раскрытие_Строки</div>
<div class="t" style="left:57px;top:376px;width:59px;height:18px;font-size:11px;line-height:14px;color:#333;font-weight:400;text-align:left;letter-spacing:0px;">Раскрытие_Строки</div>
<div class="t" style="left:57px;top:424px;width:59px;height:18px;font-size:11px;line-height:14px;color:#333;font-weight:400;text-align:left;letter-spacing:0px;">Раскрытие_Строки</div>
<div class="t" style="left:57px;top:458px;width:59px;height:18px;font-size:11px;line-height:14px;color:#333;font-weight:400;text-align:left;letter-spacing:0px;">Раскрытие_Строки</div>
<div class="t" style="left:57px;top:492px;width:59px;height:18px;font-size:11px;line-height:14px;color:#333;font-weight:400;text-align:left;letter-spacing:0px;">Раскрытие_Строки</div>
<div class="t" style="left:57px;top:526px;width:59px;height:18px;font-size:11px;line-height:14px;color:#333;font-weight:400;text-align:left;letter-spacing:0px;">Раскрытие_Строки</div>
<div class="t" style="left:57px;top:560px;width:59px;height:18px;font-size:11px;line-height:14px;color:#333;font-weight:400;text-align:left;letter-spacing:0px;">Раскрытие_Строки</div>
<div class="t" style="left:57px;top:594px;width:59px;height:18px;font-size:11px;line-height:14px;color:#333;font-weight:400;text-align:left;letter-spacing:0px;">Раскрытие_Строки</div>
<div class="t" style="left:57px;top:628px;width:59px;height:18px;font-size:11px;line-height:14px;color:#333;font-weight:400;text-align:left;letter-spacing:0px;">Раскрытие_Строки</div>
<div class="t" style="left:57px;top:662px;width:59px;height:18px;font-size:11px;line-height:14px;color:#333;font-weight:400;text-align:left;letter-spacing:0px;">Раскрытие_Строки</div>
<div class="t" style="left:57px;top:696px;width:59px;height:18px;font-size:11px;line-height:14px;color:#333;font-weight:400;text-align:left;letter-spacing:0px;">Раскрытие_Строки</div>
<div class="t" style="left:57px;top:730px;width:59px;height:18px;font-size:11px;line-height:14px;color:#333;font-weight:400;text-align:left;letter-spacing:0px;">Раскрытие_Строки</div>
<div class="t" style="left:57px;top:764px;width:59px;height:18px;font-size:11px;line-height:14px;color:#333;font-weight:400;text-align:left;letter-spacing:0px;">Раскрытие_Строки</div>
<svg class="ab" style="left:170px;top:343px" width="18" height="17"><rect x="1.5" y="0.5" width="11" height="13" rx="1" fill="#fff" stroke="#56657a" stroke-width="1"/><rect x="3" y="2" width="4" height="2" fill="#4fb08a"/><rect x="5" y="5" width="4" height="2" fill="#4fb08a"/><path d="M3.5 4 V6 H5 M5.5 7 V11.5 H7.5" fill="none" stroke="#8a8a8a" stroke-width="1"/><circle cx="11.5" cy="9.3" r="2.9" fill="#fff" stroke="#1d6aa5" stroke-width="1.4"/><path d="M13.6 11.4 L16.6 14.6" stroke="#1d6aa5" stroke-width="1.8"/></svg>
<svg class="ab" style="left:170px;top:377px" width="18" height="17"><rect x="1.5" y="0.5" width="11" height="13" rx="1" fill="#fff" stroke="#56657a" stroke-width="1"/><rect x="3" y="2" width="4" height="2" fill="#4fb08a"/><rect x="5" y="5" width="4" height="2" fill="#4fb08a"/><path d="M3.5 4 V6 H5 M5.5 7 V11.5 H7.5" fill="none" stroke="#8a8a8a" stroke-width="1"/><circle cx="11.5" cy="9.3" r="2.9" fill="#fff" stroke="#1d6aa5" stroke-width="1.4"/><path d="M13.6 11.4 L16.6 14.6" stroke="#1d6aa5" stroke-width="1.8"/></svg>
<svg class="ab" style="left:170px;top:425px" width="18" height="17"><rect x="1.5" y="0.5" width="11" height="13" rx="1" fill="#fff" stroke="#56657a" stroke-width="1"/><rect x="3" y="2" width="4" height="2" fill="#4fb08a"/><rect x="5" y="5" width="4" height="2" fill="#4fb08a"/><path d="M3.5 4 V6 H5 M5.5 7 V11.5 H7.5" fill="none" stroke="#8a8a8a" stroke-width="1"/><circle cx="11.5" cy="9.3" r="2.9" fill="#fff" stroke="#1d6aa5" stroke-width="1.4"/><path d="M13.6 11.4 L16.6 14.6" stroke="#1d6aa5" stroke-width="1.8"/></svg>
<svg class="ab" style="left:170px;top:459px" width="18" height="17"><rect x="1.5" y="0.5" width="11" height="13" rx="1" fill="#fff" stroke="#56657a" stroke-width="1"/><rect x="3" y="2" width="4" height="2" fill="#4fb08a"/><rect x="5" y="5" width="4" height="2" fill="#4fb08a"/><path d="M3.5 4 V6 H5 M5.5 7 V11.5 H7.5" fill="none" stroke="#8a8a8a" stroke-width="1"/><circle cx="11.5" cy="9.3" r="2.9" fill="#fff" stroke="#1d6aa5" stroke-width="1.4"/><path d="M13.6 11.4 L16.6 14.6" stroke="#1d6aa5" stroke-width="1.8"/></svg>
<svg class="ab" style="left:170px;top:493px" width="18" height="17"><rect x="1.5" y="0.5" width="11" height="13" rx="1" fill="#fff" stroke="#56657a" stroke-width="1"/><rect x="3" y="2" width="4" height="2" fill="#4fb08a"/><rect x="5" y="5" width="4" height="2" fill="#4fb08a"/><path d="M3.5 4 V6 H5 M5.5 7 V11.5 H7.5" fill="none" stroke="#8a8a8a" stroke-width="1"/><circle cx="11.5" cy="9.3" r="2.9" fill="#fff" stroke="#1d6aa5" stroke-width="1.4"/><path d="M13.6 11.4 L16.6 14.6" stroke="#1d6aa5" stroke-width="1.8"/></svg>
<svg class="ab" style="left:170px;top:527px" width="18" height="17"><rect x="1.5" y="0.5" width="11" height="13" rx="1" fill="#fff" stroke="#56657a" stroke-width="1"/><rect x="3" y="2" width="4" height="2" fill="#4fb08a"/><rect x="5" y="5" width="4" height="2" fill="#4fb08a"/><path d="M3.5 4 V6 H5 M5.5 7 V11.5 H7.5" fill="none" stroke="#8a8a8a" stroke-width="1"/><circle cx="11.5" cy="9.3" r="2.9" fill="#fff" stroke="#1d6aa5" stroke-width="1.4"/><path d="M13.6 11.4 L16.6 14.6" stroke="#1d6aa5" stroke-width="1.8"/></svg>
<svg class="ab" style="left:170px;top:561px" width="18" height="17"><rect x="1.5" y="0.5" width="11" height="13" rx="1" fill="#fff" stroke="#56657a" stroke-width="1"/><rect x="3" y="2" width="4" height="2" fill="#4fb08a"/><rect x="5" y="5" width="4" height="2" fill="#4fb08a"/><path d="M3.5 4 V6 H5 M5.5 7 V11.5 H7.5" fill="none" stroke="#8a8a8a" stroke-width="1"/><circle cx="11.5" cy="9.3" r="2.9" fill="#fff" stroke="#1d6aa5" stroke-width="1.4"/><path d="M13.6 11.4 L16.6 14.6" stroke="#1d6aa5" stroke-width="1.8"/></svg>
<svg class="ab" style="left:170px;top:595px" width="18" height="17"><rect x="1.5" y="0.5" width="11" height="13" rx="1" fill="#fff" stroke="#56657a" stroke-width="1"/><rect x="3" y="2" width="4" height="2" fill="#4fb08a"/><rect x="5" y="5" width="4" height="2" fill="#4fb08a"/><path d="M3.5 4 V6 H5 M5.5 7 V11.5 H7.5" fill="none" stroke="#8a8a8a" stroke-width="1"/><circle cx="11.5" cy="9.3" r="2.9" fill="#fff" stroke="#1d6aa5" stroke-width="1.4"/><path d="M13.6 11.4 L16.6 14.6" stroke="#1d6aa5" stroke-width="1.8"/></svg>
<svg class="ab" style="left:170px;top:629px" width="18" height="17"><rect x="1.5" y="0.5" width="11" height="13" rx="1" fill="#fff" stroke="#56657a" stroke-width="1"/><rect x="3" y="2" width="4" height="2" fill="#4fb08a"/><rect x="5" y="5" width="4" height="2" fill="#4fb08a"/><path d="M3.5 4 V6 H5 M5.5 7 V11.5 H7.5" fill="none" stroke="#8a8a8a" stroke-width="1"/><circle cx="11.5" cy="9.3" r="2.9" fill="#fff" stroke="#1d6aa5" stroke-width="1.4"/><path d="M13.6 11.4 L16.6 14.6" stroke="#1d6aa5" stroke-width="1.8"/></svg>
<svg class="ab" style="left:170px;top:663px" width="18" height="17"><rect x="1.5" y="0.5" width="11" height="13" rx="1" fill="#fff" stroke="#56657a" stroke-width="1"/><rect x="3" y="2" width="4" height="2" fill="#4fb08a"/><rect x="5" y="5" width="4" height="2" fill="#4fb08a"/><path d="M3.5 4 V6 H5 M5.5 7 V11.5 H7.5" fill="none" stroke="#8a8a8a" stroke-width="1"/><circle cx="11.5" cy="9.3" r="2.9" fill="#fff" stroke="#1d6aa5" stroke-width="1.4"/><path d="M13.6 11.4 L16.6 14.6" stroke="#1d6aa5" stroke-width="1.8"/></svg>
<svg class="ab" style="left:170px;top:697px" width="18" height="17"><rect x="1.5" y="0.5" width="11" height="13" rx="1" fill="#fff" stroke="#56657a" stroke-width="1"/><rect x="3" y="2" width="4" height="2" fill="#4fb08a"/><rect x="5" y="5" width="4" height="2" fill="#4fb08a"/><path d="M3.5 4 V6 H5 M5.5 7 V11.5 H7.5" fill="none" stroke="#8a8a8a" stroke-width="1"/><circle cx="11.5" cy="9.3" r="2.9" fill="#fff" stroke="#1d6aa5" stroke-width="1.4"/><path d="M13.6 11.4 L16.6 14.6" stroke="#1d6aa5" stroke-width="1.8"/></svg>
<svg class="ab" style="left:170px;top:731px" width="18" height="17"><rect x="1.5" y="0.5" width="11" height="13" rx="1" fill="#fff" stroke="#56657a" stroke-width="1"/><rect x="3" y="2" width="4" height="2" fill="#4fb08a"/><rect x="5" y="5" width="4" height="2" fill="#4fb08a"/><path d="M3.5 4 V6 H5 M5.5 7 V11.5 H7.5" fill="none" stroke="#8a8a8a" stroke-width="1"/><circle cx="11.5" cy="9.3" r="2.9" fill="#fff" stroke="#1d6aa5" stroke-width="1.4"/><path d="M13.6 11.4 L16.6 14.6" stroke="#1d6aa5" stroke-width="1.8"/></svg>
<svg class="ab" style="left:170px;top:765px" width="18" height="17"><rect x="1.5" y="0.5" width="11" height="13" rx="1" fill="#fff" stroke="#56657a" stroke-width="1"/><rect x="3" y="2" width="4" height="2" fill="#4fb08a"/><rect x="5" y="5" width="4" height="2" fill="#4fb08a"/><path d="M3.5 4 V6 H5 M5.5 7 V11.5 H7.5" fill="none" stroke="#8a8a8a" stroke-width="1"/><circle cx="11.5" cy="9.3" r="2.9" fill="#fff" stroke="#1d6aa5" stroke-width="1.4"/><path d="M13.6 11.4 L16.6 14.6" stroke="#1d6aa5" stroke-width="1.8"/></svg>
<svg class="ab" style="left:850px;top:225px" width="18" height="17"><rect x="1.5" y="0.5" width="11" height="13" rx="1" fill="#fff" stroke="#56657a" stroke-width="1"/><rect x="3" y="2" width="4" height="2" fill="#4fb08a"/><rect x="5" y="5" width="4" height="2" fill="#4fb08a"/><path d="M3.5 4 V6 H5 M5.5 7 V11.5 H7.5" fill="none" stroke="#8a8a8a" stroke-width="1"/><circle cx="11.5" cy="9.3" r="2.9" fill="#fff" stroke="#1d6aa5" stroke-width="1.4"/><path d="M13.6 11.4 L16.6 14.6" stroke="#1d6aa5" stroke-width="1.8"/></svg>
<div class="t" style="left:212px;top:265px;width:241px;height:61px;font-size:13.33px;line-height:61px;color:#fff;font-weight:400;text-align:left;letter-spacing:-0.42px;">Сводная таблица</div>
<div class="t" style="left:454px;top:265px;width:106px;height:61px;font-size:13.33px;line-height:61px;color:#fff;font-weight:400;text-align:center;letter-spacing:-0.6px;">Организация</div>
<div class="t" style="left:561px;top:265px;width:84px;height:61px;font-size:13.33px;line-height:61px;color:#fff;font-weight:400;text-align:center;letter-spacing:-0.54px;">Проект</div>
<div class="t" style="left:646px;top:265px;width:160px;height:61px;font-size:13.33px;line-height:61px;color:#fff;font-weight:400;text-align:center;letter-spacing:-0.66px;">Статьи доходов и расходов</div>
<div class="t" style="left:807px;top:265px;width:419px;height:15px;font-size:13.33px;line-height:15px;color:#fff;font-weight:400;text-align:center;letter-spacing:-0.57px;">[Период отчета]</div>
<div class="t" style="left:807px;top:281px;width:104px;height:45px;font-size:13.33px;line-height:45px;color:#fff;font-weight:400;text-align:center;letter-spacing:-0.58px;">Сумма с НДС</div>
<div class="t" style="left:912px;top:281px;width:104px;height:45px;font-size:13.33px;line-height:14px;color:#fff;font-weight:400;text-align:center;letter-spacing:-0.58px;padding-top:8px;height:37px;">Сумма с НДС<br>(План.БК(4))</div>
<div class="t" style="left:1017px;top:281px;width:104px;height:45px;font-size:13.33px;line-height:15px;color:#fff;font-weight:400;text-align:center;letter-spacing:-0.65px;">Δ (текущее<br>значение от<br>базы)</div>
<div class="t" style="left:1122px;top:281px;width:104px;height:45px;font-size:13.33px;line-height:15px;color:#fff;font-weight:400;text-align:center;letter-spacing:-0.65px;">Δ% (текущее<br>значение от<br>базы)</div>
<div class="ab" style="left:1119px;top:277px;width:106px;height:49px;border:2px solid #f4c414;border-right:none"></div>
<div class="t" style="left:211px;top:327px;width:240px;height:14px;font-size:11px;line-height:15px;color:#3a3a3a;font-weight:700;text-align:left;letter-spacing:0.06px;">ВСЕГО доходов</div>
<div class="t" style="left:807px;top:327px;width:102px;height:14px;font-size:11px;line-height:15px;color:#333;font-weight:400;text-align:right;letter-spacing:0.1px;direction:rtl;">ДДДдоходов<span style="letter-spacing:-0.18px">_СуммаСНДС</span></div>
<div class="t" style="left:912px;top:327px;width:102px;height:14px;font-size:11px;line-height:15px;color:#333;font-weight:400;text-align:right;letter-spacing:0.1px;direction:rtl;">ДДДдоходов<span style="letter-spacing:-0.18px">_СуммаСНДС</span></div>
<div class="t" style="left:1017px;top:327px;width:102px;height:14px;font-size:11px;line-height:15px;color:#333;font-weight:400;text-align:right;letter-spacing:0.1px;direction:rtl;">ДДДдоходов<span style="letter-spacing:-0.18px">_СуммаСНДС</span></div>
<div class="t" style="left:1122px;top:327px;width:102px;height:14px;font-size:11px;line-height:15px;color:#333;font-weight:400;text-align:right;letter-spacing:0.1px;direction:rtl;">ДДДдоходов<span style="letter-spacing:-0.18px">_СуммаСНДС</span></div>
<div class="t" style="left:456px;top:342px;width:104px;height:18px;font-size:11px;line-height:15px;color:#333;font-weight:400;text-align:left;letter-spacing:-0.12px;">[Организация]</div>
<div class="t" style="left:563px;top:342px;width:82px;height:18px;font-size:11px;line-height:15px;color:#333;font-weight:400;text-align:left;letter-spacing:0px;">[Проект]</div>
<div class="t" style="left:807px;top:342px;width:102px;height:18px;font-size:11px;line-height:15px;color:#333;font-weight:400;text-align:right;letter-spacing:0.1px;direction:rtl;">ДДДдоходов<span style="letter-spacing:-0.18px">_СуммаСНДС</span></div>
<div class="t" style="left:912px;top:342px;width:102px;height:18px;font-size:11px;line-height:15px;color:#333;font-weight:400;text-align:right;letter-spacing:0.1px;direction:rtl;">ДДДдоходов<span style="letter-spacing:-0.18px">_СуммаСНДС</span></div>
<div class="t" style="left:1017px;top:342px;width:102px;height:18px;font-size:11px;line-height:15px;color:#333;font-weight:400;text-align:right;letter-spacing:0.1px;direction:rtl;">ДДДдоходов<span style="letter-spacing:-0.18px">_СуммаСНДС</span></div>
<div class="t" style="left:1122px;top:342px;width:102px;height:18px;font-size:11px;line-height:15px;color:#333;font-weight:400;text-align:right;letter-spacing:0.1px;direction:rtl;">ДДДдоходов<span style="letter-spacing:-0.18px">_СуммаСНДС</span></div>
<div class="t" style="left:225px;top:361px;width:240px;height:14px;font-size:11px;line-height:15px;color:#3a3a3a;font-weight:700;text-align:left;letter-spacing:0.06px;">Доходы от медицинской деятельности</div>
<div class="t" style="left:807px;top:361px;width:102px;height:14px;font-size:11px;line-height:15px;color:#333;font-weight:400;text-align:right;letter-spacing:0.1px;direction:rtl;">ДДДдеятел<span style="letter-spacing:-0.18px">_СуммаСНДС</span></div>
<div class="t" style="left:912px;top:361px;width:102px;height:14px;font-size:11px;line-height:15px;color:#333;font-weight:400;text-align:right;letter-spacing:0.1px;direction:rtl;">ДДДдеятел<span style="letter-spacing:-0.18px">_СуммаСНДС</span></div>
<div class="t" style="left:1017px;top:361px;width:102px;height:14px;font-size:11px;line-height:15px;color:#333;font-weight:400;text-align:right;letter-spacing:0.1px;direction:rtl;">ДДДдеятел<span style="letter-spacing:-0.18px">_СуммаСНДС</span></div>
<div class="t" style="left:1122px;top:361px;width:102px;height:14px;font-size:11px;line-height:15px;color:#333;font-weight:400;text-align:right;letter-spacing:0.1px;direction:rtl;">ДДДдеятел<span style="letter-spacing:-0.18px">_СуммаСНДС</span></div>
<div class="t" style="left:456px;top:376px;width:104px;height:18px;font-size:11px;line-height:15px;color:#333;font-weight:400;text-align:left;letter-spacing:-0.12px;">[Организация]</div>
<div class="t" style="left:563px;top:376px;width:82px;height:18px;font-size:11px;line-height:15px;color:#333;font-weight:400;text-align:left;letter-spacing:0px;">[Проект]</div>
<div class="t" style="left:648px;top:376px;width:158px;height:18px;font-size:11px;line-height:15px;color:#333;font-weight:400;text-align:left;letter-spacing:0.15px;">[Статьи доходов и расходов]</div>
<div class="t" style="left:807px;top:376px;width:102px;height:18px;font-size:11px;line-height:15px;color:#333;font-weight:400;text-align:right;letter-spacing:0.1px;direction:rtl;">ДДДдеятел<span style="letter-spacing:-0.18px">_СуммаСНДС</span></div>
<div class="t" style="left:912px;top:376px;width:102px;height:18px;font-size:11px;line-height:15px;color:#333;font-weight:400;text-align:right;letter-spacing:0.1px;direction:rtl;">ДДДдеятел<span style="letter-spacing:-0.18px">_СуммаСНДС</span></div>
<div class="t" style="left:1017px;top:376px;width:102px;height:18px;font-size:11px;line-height:15px;color:#333;font-weight:400;text-align:right;letter-spacing:0.1px;direction:rtl;">ДДДдеятел<span style="letter-spacing:-0.18px">_СуммаСНДС</span></div>
<div class="t" style="left:1122px;top:376px;width:102px;height:18px;font-size:11px;line-height:15px;color:#333;font-weight:400;text-align:right;letter-spacing:0.1px;direction:rtl;">ДДДдеятел<span style="letter-spacing:-0.18px">_СуммаСНДС</span></div>
<div class="t" style="left:225px;top:395px;width:240px;height:28px;font-size:11px;line-height:14px;color:#3a3a3a;font-weight:700;text-align:left;letter-spacing:0.06px;">Доходы от немедицинской<br>деятельности</div>
<div class="t" style="left:807px;top:395px;width:102px;height:28px;font-size:11px;line-height:15px;color:#333;font-weight:400;text-align:right;letter-spacing:0.1px;direction:rtl;">ДДДдеятел<span style="letter-spacing:-0.18px">_СуммаСНДС</span></div>
<div class="t" style="left:912px;top:395px;width:102px;height:28px;font-size:11px;line-height:15px;color:#333;font-weight:400;text-align:right;letter-spacing:0.1px;direction:rtl;">ДДДдеятел<span style="letter-spacing:-0.18px">_СуммаСНДС</span></div>
<div class="t" style="left:1017px;top:395px;width:102px;height:28px;font-size:11px;line-height:15px;color:#333;font-weight:400;text-align:right;letter-spacing:0.1px;direction:rtl;">ДДДдеятел<span style="letter-spacing:-0.18px">_СуммаСНДС</span></div>
<div class="t" style="left:1122px;top:395px;width:102px;height:28px;font-size:11px;line-height:15px;color:#333;font-weight:400;text-align:right;letter-spacing:0.1px;direction:rtl;">ДДДдеятел<span style="letter-spacing:-0.18px">_СуммаСНДС</span></div>
<div class="t" style="left:456px;top:424px;width:104px;height:18px;font-size:11px;line-height:15px;color:#333;font-weight:400;text-align:left;letter-spacing:-0.12px;">[Организация]</div>
<div class="t" style="left:563px;top:424px;width:82px;height:18px;font-size:11px;line-height:15px;color:#333;font-weight:400;text-align:left;letter-spacing:0px;">[Проект]</div>
<div class="t" style="left:648px;top:424px;width:158px;height:18px;font-size:11px;line-height:15px;color:#333;font-weight:400;text-align:left;letter-spacing:0.15px;">[Статьи доходов и расходов]</div>
<div class="t" style="left:807px;top:424px;width:102px;height:18px;font-size:11px;line-height:15px;color:#333;font-weight:400;text-align:right;letter-spacing:0.1px;direction:rtl;">ДДДдеятел<span style="letter-spacing:-0.18px">_СуммаСНДС</span></div>
<div class="t" style="left:912px;top:424px;width:102px;height:18px;font-size:11px;line-height:15px;color:#333;font-weight:400;text-align:right;letter-spacing:0.1px;direction:rtl;">ДДДдеятел<span style="letter-spacing:-0.18px">_СуммаСНДС</span></div>
<div class="t" style="left:1017px;top:424px;width:102px;height:18px;font-size:11px;line-height:15px;color:#333;font-weight:400;text-align:right;letter-spacing:0.1px;direction:rtl;">ДДДдеятел<span style="letter-spacing:-0.18px">_СуммаСНДС</span></div>
<div class="t" style="left:1122px;top:424px;width:102px;height:18px;font-size:11px;line-height:15px;color:#333;font-weight:400;text-align:right;letter-spacing:0.1px;direction:rtl;">ДДДдеятел<span style="letter-spacing:-0.18px">_СуммаСНДС</span></div>
<div class="t" style="left:225px;top:443px;width:240px;height:14px;font-size:11px;line-height:15px;color:#3a3a3a;font-weight:700;text-align:left;letter-spacing:0.06px;">Прочие доходы</div>
<div class="t" style="left:807px;top:443px;width:102px;height:14px;font-size:11px;line-height:15px;color:#333;font-weight:400;text-align:right;letter-spacing:0.1px;direction:rtl;">ДДДдоходы<span style="letter-spacing:-0.18px">_СуммаСНДС</span></div>
<div class="t" style="left:912px;top:443px;width:102px;height:14px;font-size:11px;line-height:15px;color:#333;font-weight:400;text-align:right;letter-spacing:0.1px;direction:rtl;">ДДДдоходы<span style="letter-spacing:-0.18px">_СуммаСНДС</span></div>
<div class="t" style="left:1017px;top:443px;width:102px;height:14px;font-size:11px;line-height:15px;color:#333;font-weight:400;text-align:right;letter-spacing:0.1px;direction:rtl;">ДДДдоходы<span style="letter-spacing:-0.18px">_СуммаСНДС</span></div>
<div class="t" style="left:1122px;top:443px;width:102px;height:14px;font-size:11px;line-height:15px;color:#333;font-weight:400;text-align:right;letter-spacing:0.1px;direction:rtl;">ДДДдоходы<span style="letter-spacing:-0.18px">_СуммаСНДС</span></div>
<div class="t" style="left:456px;top:458px;width:104px;height:18px;font-size:11px;line-height:15px;color:#333;font-weight:400;text-align:left;letter-spacing:-0.12px;">[Организация]</div>
<div class="t" style="left:563px;top:458px;width:82px;height:18px;font-size:11px;line-height:15px;color:#333;font-weight:400;text-align:left;letter-spacing:0px;">[Проект]</div>
<div class="t" style="left:648px;top:458px;width:158px;height:18px;font-size:11px;line-height:15px;color:#333;font-weight:400;text-align:left;letter-spacing:0.15px;">[Статьи доходов и расходов]</div>
<div class="t" style="left:807px;top:458px;width:102px;height:18px;font-size:11px;line-height:15px;color:#333;font-weight:400;text-align:right;letter-spacing:0.1px;direction:rtl;">ДДДдоходы<span style="letter-spacing:-0.18px">_СуммаСНДС</span></div>
<div class="t" style="left:912px;top:458px;width:102px;height:18px;font-size:11px;line-height:15px;color:#333;font-weight:400;text-align:right;letter-spacing:0.1px;direction:rtl;">ДДДдоходы<span style="letter-spacing:-0.18px">_СуммаСНДС</span></div>
<div class="t" style="left:1017px;top:458px;width:102px;height:18px;font-size:11px;line-height:15px;color:#333;font-weight:400;text-align:right;letter-spacing:0.1px;direction:rtl;">ДДДдоходы<span style="letter-spacing:-0.18px">_СуммаСНДС</span></div>
<div class="t" style="left:1122px;top:458px;width:102px;height:18px;font-size:11px;line-height:15px;color:#333;font-weight:400;text-align:right;letter-spacing:0.1px;direction:rtl;">ДДДдоходы<span style="letter-spacing:-0.18px">_СуммаСНДС</span></div>
<div class="t" style="left:211px;top:477px;width:240px;height:14px;font-size:11px;line-height:15px;color:#3a3a3a;font-weight:700;text-align:left;letter-spacing:0.0px;">ВСЕГО расходов</div>
<div class="t" style="left:807px;top:477px;width:102px;height:14px;font-size:11px;line-height:15px;color:#333;font-weight:400;text-align:right;letter-spacing:0.1px;direction:rtl;">ДДДасходов<span style="letter-spacing:-0.18px">_СуммаСНДС</span></div>
<div class="t" style="left:912px;top:477px;width:102px;height:14px;font-size:11px;line-height:15px;color:#333;font-weight:400;text-align:right;letter-spacing:0.1px;direction:rtl;">ДДДасходов<span style="letter-spacing:-0.18px">_СуммаСНДС</span></div>
<div class="t" style="left:1017px;top:477px;width:102px;height:14px;font-size:11px;line-height:15px;color:#333;font-weight:400;text-align:right;letter-spacing:0.1px;direction:rtl;">ДДДасходов<span style="letter-spacing:-0.18px">_СуммаСНДС</span></div>
<div class="t" style="left:1122px;top:477px;width:102px;height:14px;font-size:11px;line-height:15px;color:#333;font-weight:400;text-align:right;letter-spacing:0.1px;direction:rtl;">ДДДасходов<span style="letter-spacing:-0.18px">_СуммаСНДС</span></div>
<div class="t" style="left:456px;top:492px;width:104px;height:18px;font-size:11px;line-height:15px;color:#333;font-weight:400;text-align:left;letter-spacing:-0.12px;">[Организация]</div>
<div class="t" style="left:563px;top:492px;width:82px;height:18px;font-size:11px;line-height:15px;color:#333;font-weight:400;text-align:left;letter-spacing:0px;">[Проект]</div>
<div class="t" style="left:807px;top:492px;width:102px;height:18px;font-size:11px;line-height:15px;color:#333;font-weight:400;text-align:right;letter-spacing:0.1px;direction:rtl;">ДДДасходов<span style="letter-spacing:-0.18px">_СуммаСНДС</span></div>
<div class="t" style="left:912px;top:492px;width:102px;height:18px;font-size:11px;line-height:15px;color:#333;font-weight:400;text-align:right;letter-spacing:0.1px;direction:rtl;">ДДДасходов<span style="letter-spacing:-0.18px">_СуммаСНДС</span></div>
<div class="t" style="left:1017px;top:492px;width:102px;height:18px;font-size:11px;line-height:15px;color:#333;font-weight:400;text-align:right;letter-spacing:0.1px;direction:rtl;">ДДДасходов<span style="letter-spacing:-0.18px">_СуммаСНДС</span></div>
<div class="t" style="left:1122px;top:492px;width:102px;height:18px;font-size:11px;line-height:15px;color:#333;font-weight:400;text-align:right;letter-spacing:0.1px;direction:rtl;">ДДДасходов<span style="letter-spacing:-0.18px">_СуммаСНДС</span></div>
<div class="t" style="left:225px;top:511px;width:240px;height:14px;font-size:11px;line-height:15px;color:#3a3a3a;font-weight:700;text-align:left;letter-spacing:0.06px;">Расходы</div>
<div class="t" style="left:807px;top:511px;width:102px;height:14px;font-size:11px;line-height:15px;color:#333;font-weight:400;text-align:right;letter-spacing:0.1px;direction:rtl;">ДДДасходы<span style="letter-spacing:-0.18px">_СуммаСНДС</span></div>
<div class="t" style="left:912px;top:511px;width:102px;height:14px;font-size:11px;line-height:15px;color:#333;font-weight:400;text-align:right;letter-spacing:0.1px;direction:rtl;">ДДДасходы<span style="letter-spacing:-0.18px">_СуммаСНДС</span></div>
<div class="t" style="left:1017px;top:511px;width:102px;height:14px;font-size:11px;line-height:15px;color:#333;font-weight:400;text-align:right;letter-spacing:0.1px;direction:rtl;">ДДДасходы<span style="letter-spacing:-0.18px">_СуммаСНДС</span></div>
<div class="t" style="left:1122px;top:511px;width:102px;height:14px;font-size:11px;line-height:15px;color:#333;font-weight:400;text-align:right;letter-spacing:0.1px;direction:rtl;">ДДДасходы<span style="letter-spacing:-0.18px">_СуммаСНДС</span></div>
<div class="t" style="left:456px;top:526px;width:104px;height:18px;font-size:11px;line-height:15px;color:#333;font-weight:400;text-align:left;letter-spacing:-0.12px;">[Организация]</div>
<div class="t" style="left:563px;top:526px;width:82px;height:18px;font-size:11px;line-height:15px;color:#333;font-weight:400;text-align:left;letter-spacing:0px;">[Проект]</div>
<div class="t" style="left:648px;top:526px;width:158px;height:18px;font-size:11px;line-height:15px;color:#333;font-weight:400;text-align:left;letter-spacing:0.15px;">[Статьи доходов и расходов]</div>
<div class="t" style="left:807px;top:526px;width:102px;height:18px;font-size:11px;line-height:15px;color:#333;font-weight:400;text-align:right;letter-spacing:0.1px;direction:rtl;">ДДДасходы<span style="letter-spacing:-0.18px">_СуммаСНДС</span></div>
<div class="t" style="left:912px;top:526px;width:102px;height:18px;font-size:11px;line-height:15px;color:#333;font-weight:400;text-align:right;letter-spacing:0.1px;direction:rtl;">ДДДасходы<span style="letter-spacing:-0.18px">_СуммаСНДС</span></div>
<div class="t" style="left:1017px;top:526px;width:102px;height:18px;font-size:11px;line-height:15px;color:#333;font-weight:400;text-align:right;letter-spacing:0.1px;direction:rtl;">ДДДасходы<span style="letter-spacing:-0.18px">_СуммаСНДС</span></div>
<div class="t" style="left:1122px;top:526px;width:102px;height:18px;font-size:11px;line-height:15px;color:#333;font-weight:400;text-align:right;letter-spacing:0.1px;direction:rtl;">ДДДасходы<span style="letter-spacing:-0.18px">_СуммаСНДС</span></div>
<div class="t" style="left:225px;top:545px;width:240px;height:14px;font-size:11px;line-height:15px;color:#3a3a3a;font-weight:700;text-align:left;letter-spacing:0.06px;">Расходы на персонал</div>
<div class="t" style="left:807px;top:545px;width:102px;height:14px;font-size:11px;line-height:15px;color:#333;font-weight:400;text-align:right;letter-spacing:0.1px;direction:rtl;">ДДДерсонал<span style="letter-spacing:-0.18px">_СуммаСНДС</span></div>
<div class="t" style="left:912px;top:545px;width:102px;height:14px;font-size:11px;line-height:15px;color:#333;font-weight:400;text-align:right;letter-spacing:0.1px;direction:rtl;">ДДДерсонал<span style="letter-spacing:-0.18px">_СуммаСНДС</span></div>
<div class="t" style="left:1017px;top:545px;width:102px;height:14px;font-size:11px;line-height:15px;color:#333;font-weight:400;text-align:right;letter-spacing:0.1px;direction:rtl;">ДДДерсонал<span style="letter-spacing:-0.18px">_СуммаСНДС</span></div>
<div class="t" style="left:1122px;top:545px;width:102px;height:14px;font-size:11px;line-height:15px;color:#333;font-weight:400;text-align:right;letter-spacing:0.1px;direction:rtl;">ДДДерсонал<span style="letter-spacing:-0.18px">_СуммаСНДС</span></div>
<div class="t" style="left:456px;top:560px;width:104px;height:18px;font-size:11px;line-height:15px;color:#333;font-weight:400;text-align:left;letter-spacing:-0.12px;">[Организация]</div>
<div class="t" style="left:563px;top:560px;width:82px;height:18px;font-size:11px;line-height:15px;color:#333;font-weight:400;text-align:left;letter-spacing:0px;">[Проект]</div>
<div class="t" style="left:648px;top:560px;width:158px;height:18px;font-size:11px;line-height:15px;color:#333;font-weight:400;text-align:left;letter-spacing:0.15px;">[Статьи доходов и расходов]</div>
<div class="t" style="left:807px;top:560px;width:102px;height:18px;font-size:11px;line-height:15px;color:#333;font-weight:400;text-align:right;letter-spacing:0.1px;direction:rtl;">ДДДерсонал<span style="letter-spacing:-0.18px">_СуммаСНДС</span></div>
<div class="t" style="left:912px;top:560px;width:102px;height:18px;font-size:11px;line-height:15px;color:#333;font-weight:400;text-align:right;letter-spacing:0.1px;direction:rtl;">ДДДерсонал<span style="letter-spacing:-0.18px">_СуммаСНДС</span></div>
<div class="t" style="left:1017px;top:560px;width:102px;height:18px;font-size:11px;line-height:15px;color:#333;font-weight:400;text-align:right;letter-spacing:0.1px;direction:rtl;">ДДДерсонал<span style="letter-spacing:-0.18px">_СуммаСНДС</span></div>
<div class="t" style="left:1122px;top:560px;width:102px;height:18px;font-size:11px;line-height:15px;color:#333;font-weight:400;text-align:right;letter-spacing:0.1px;direction:rtl;">ДДДерсонал<span style="letter-spacing:-0.18px">_СуммаСНДС</span></div>
<div class="t" style="left:225px;top:579px;width:240px;height:14px;font-size:11px;line-height:15px;color:#3a3a3a;font-weight:700;text-align:left;letter-spacing:0.06px;">Прочие расходы</div>
<div class="t" style="left:807px;top:579px;width:102px;height:14px;font-size:11px;line-height:15px;color:#333;font-weight:400;text-align:right;letter-spacing:0.1px;direction:rtl;">ДДДасходы<span style="letter-spacing:-0.18px">_СуммаСНДС</span></div>
<div class="t" style="left:912px;top:579px;width:102px;height:14px;font-size:11px;line-height:15px;color:#333;font-weight:400;text-align:right;letter-spacing:0.1px;direction:rtl;">ДДДасходы<span style="letter-spacing:-0.18px">_СуммаСНДС</span></div>
<div class="t" style="left:1017px;top:579px;width:102px;height:14px;font-size:11px;line-height:15px;color:#333;font-weight:400;text-align:right;letter-spacing:0.1px;direction:rtl;">ДДДасходы<span style="letter-spacing:-0.18px">_СуммаСНДС</span></div>
<div class="t" style="left:1122px;top:579px;width:102px;height:14px;font-size:11px;line-height:15px;color:#333;font-weight:400;text-align:right;letter-spacing:0.1px;direction:rtl;">ДДДасходы<span style="letter-spacing:-0.18px">_СуммаСНДС</span></div>
<div class="t" style="left:456px;top:594px;width:104px;height:18px;font-size:11px;line-height:15px;color:#333;font-weight:400;text-align:left;letter-spacing:-0.12px;">[Организация]</div>
<div class="t" style="left:563px;top:594px;width:82px;height:18px;font-size:11px;line-height:15px;color:#333;font-weight:400;text-align:left;letter-spacing:0px;">[Проект]</div>
<div class="t" style="left:648px;top:594px;width:158px;height:18px;font-size:11px;line-height:15px;color:#333;font-weight:400;text-align:left;letter-spacing:0.15px;">[Статьи доходов и расходов]</div>
<div class="t" style="left:807px;top:594px;width:102px;height:18px;font-size:11px;line-height:15px;color:#333;font-weight:400;text-align:right;letter-spacing:0.1px;direction:rtl;">ДДДасходы<span style="letter-spacing:-0.18px">_СуммаСНДС</span></div>
<div class="t" style="left:912px;top:594px;width:102px;height:18px;font-size:11px;line-height:15px;color:#333;font-weight:400;text-align:right;letter-spacing:0.1px;direction:rtl;">ДДДасходы<span style="letter-spacing:-0.18px">_СуммаСНДС</span></div>
<div class="t" style="left:1017px;top:594px;width:102px;height:18px;font-size:11px;line-height:15px;color:#333;font-weight:400;text-align:right;letter-spacing:0.1px;direction:rtl;">ДДДасходы<span style="letter-spacing:-0.18px">_СуммаСНДС</span></div>
<div class="t" style="left:1122px;top:594px;width:102px;height:18px;font-size:11px;line-height:15px;color:#333;font-weight:400;text-align:right;letter-spacing:0.1px;direction:rtl;">ДДДасходы<span style="letter-spacing:-0.18px">_СуммаСНДС</span></div>
<div class="t" style="left:225px;top:613px;width:240px;height:14px;font-size:11px;line-height:15px;color:#3a3a3a;font-weight:700;text-align:left;letter-spacing:0.06px;">Амортизация</div>
<div class="t" style="left:807px;top:613px;width:102px;height:14px;font-size:11px;line-height:15px;color:#333;font-weight:400;text-align:right;letter-spacing:0.1px;direction:rtl;">ДДДтизация<span style="letter-spacing:-0.18px">_СуммаСНДС</span></div>
<div class="t" style="left:912px;top:613px;width:102px;height:14px;font-size:11px;line-height:15px;color:#333;font-weight:400;text-align:right;letter-spacing:0.1px;direction:rtl;">ДДДтизация<span style="letter-spacing:-0.18px">_СуммаСНДС</span></div>
<div class="t" style="left:1017px;top:613px;width:102px;height:14px;font-size:11px;line-height:15px;color:#333;font-weight:400;text-align:right;letter-spacing:0.1px;direction:rtl;">ДДДтизация<span style="letter-spacing:-0.18px">_СуммаСНДС</span></div>
<div class="t" style="left:1122px;top:613px;width:102px;height:14px;font-size:11px;line-height:15px;color:#333;font-weight:400;text-align:right;letter-spacing:0.1px;direction:rtl;">ДДДтизация<span style="letter-spacing:-0.18px">_СуммаСНДС</span></div>
<div class="t" style="left:456px;top:628px;width:104px;height:18px;font-size:11px;line-height:15px;color:#333;font-weight:400;text-align:left;letter-spacing:-0.12px;">[Организация]</div>
<div class="t" style="left:563px;top:628px;width:82px;height:18px;font-size:11px;line-height:15px;color:#333;font-weight:400;text-align:left;letter-spacing:0px;">[Проект]</div>
<div class="t" style="left:648px;top:628px;width:158px;height:18px;font-size:11px;line-height:15px;color:#333;font-weight:400;text-align:left;letter-spacing:0.15px;">[Статьи доходов и расходов]</div>
<div class="t" style="left:807px;top:628px;width:102px;height:18px;font-size:11px;line-height:15px;color:#333;font-weight:400;text-align:right;letter-spacing:0.1px;direction:rtl;">ДДДтизация<span style="letter-spacing:-0.18px">_СуммаСНДС</span></div>
<div class="t" style="left:912px;top:628px;width:102px;height:18px;font-size:11px;line-height:15px;color:#333;font-weight:400;text-align:right;letter-spacing:0.1px;direction:rtl;">ДДДтизация<span style="letter-spacing:-0.18px">_СуммаСНДС</span></div>
<div class="t" style="left:1017px;top:628px;width:102px;height:18px;font-size:11px;line-height:15px;color:#333;font-weight:400;text-align:right;letter-spacing:0.1px;direction:rtl;">ДДДтизация<span style="letter-spacing:-0.18px">_СуммаСНДС</span></div>
<div class="t" style="left:1122px;top:628px;width:102px;height:18px;font-size:11px;line-height:15px;color:#333;font-weight:400;text-align:right;letter-spacing:0.1px;direction:rtl;">ДДДтизация<span style="letter-spacing:-0.18px">_СуммаСНДС</span></div>
<div class="t" style="left:211px;top:647px;width:240px;height:14px;font-size:11px;line-height:15px;color:#3a3a3a;font-weight:700;text-align:left;letter-spacing:0.06px;">ВСЕГО доходов (технический показатель)</div>
<div class="t" style="left:807px;top:647px;width:102px;height:14px;font-size:11px;line-height:15px;color:#333;font-weight:400;text-align:right;letter-spacing:0.1px;direction:rtl;">ДДДйПоказ<span style="letter-spacing:-0.18px">_СуммаСНДС</span></div>
<div class="t" style="left:912px;top:647px;width:102px;height:14px;font-size:11px;line-height:15px;color:#333;font-weight:400;text-align:right;letter-spacing:0.1px;direction:rtl;">ДДДйПоказ<span style="letter-spacing:-0.18px">_СуммаСНДС</span></div>
<div class="t" style="left:1017px;top:647px;width:102px;height:14px;font-size:11px;line-height:15px;color:#333;font-weight:400;text-align:right;letter-spacing:0.1px;direction:rtl;">ДДДйПоказ<span style="letter-spacing:-0.18px">_СуммаСНДС</span></div>
<div class="t" style="left:1122px;top:647px;width:102px;height:14px;font-size:11px;line-height:15px;color:#333;font-weight:400;text-align:right;letter-spacing:0.1px;direction:rtl;">ДДДйПоказ<span style="letter-spacing:-0.18px">_СуммаСНДС</span></div>
<div class="t" style="left:456px;top:662px;width:104px;height:18px;font-size:11px;line-height:15px;color:#333;font-weight:400;text-align:left;letter-spacing:-0.12px;">[Организация]</div>
<div class="t" style="left:563px;top:662px;width:82px;height:18px;font-size:11px;line-height:15px;color:#333;font-weight:400;text-align:left;letter-spacing:0px;">[Проект]</div>
<div class="t" style="left:807px;top:662px;width:102px;height:18px;font-size:11px;line-height:15px;color:#333;font-weight:400;text-align:right;letter-spacing:0.1px;direction:rtl;">ДДДйПоказ<span style="letter-spacing:-0.18px">_СуммаСНДС</span></div>
<div class="t" style="left:912px;top:662px;width:102px;height:18px;font-size:11px;line-height:15px;color:#333;font-weight:400;text-align:right;letter-spacing:0.1px;direction:rtl;">ДДДйПоказ<span style="letter-spacing:-0.18px">_СуммаСНДС</span></div>
<div class="t" style="left:1017px;top:662px;width:102px;height:18px;font-size:11px;line-height:15px;color:#333;font-weight:400;text-align:right;letter-spacing:0.1px;direction:rtl;">ДДДйПоказ<span style="letter-spacing:-0.18px">_СуммаСНДС</span></div>
<div class="t" style="left:1122px;top:662px;width:102px;height:18px;font-size:11px;line-height:15px;color:#333;font-weight:400;text-align:right;letter-spacing:0.1px;direction:rtl;">ДДДйПоказ<span style="letter-spacing:-0.18px">_СуммаСНДС</span></div>
<div class="t" style="left:211px;top:681px;width:240px;height:14px;font-size:11px;line-height:15px;color:#3a3a3a;font-weight:700;text-align:left;letter-spacing:0.0px;">ВСЕГО расходов (технический показатель)</div>
<div class="t" style="left:807px;top:681px;width:102px;height:14px;font-size:11px;line-height:15px;color:#333;font-weight:400;text-align:right;letter-spacing:0.1px;direction:rtl;">ДДДйПоказ<span style="letter-spacing:-0.18px">_СуммаСНДС</span></div>
<div class="t" style="left:912px;top:681px;width:102px;height:14px;font-size:11px;line-height:15px;color:#333;font-weight:400;text-align:right;letter-spacing:0.1px;direction:rtl;">ДДДйПоказ<span style="letter-spacing:-0.18px">_СуммаСНДС</span></div>
<div class="t" style="left:1017px;top:681px;width:102px;height:14px;font-size:11px;line-height:15px;color:#333;font-weight:400;text-align:right;letter-spacing:0.1px;direction:rtl;">ДДДйПоказ<span style="letter-spacing:-0.18px">_СуммаСНДС</span></div>
<div class="t" style="left:1122px;top:681px;width:102px;height:14px;font-size:11px;line-height:15px;color:#333;font-weight:400;text-align:right;letter-spacing:0.1px;direction:rtl;">ДДДйПоказ<span style="letter-spacing:-0.18px">_СуммаСНДС</span></div>
<div class="t" style="left:456px;top:696px;width:104px;height:18px;font-size:11px;line-height:15px;color:#333;font-weight:400;text-align:left;letter-spacing:-0.12px;">[Организация]</div>
<div class="t" style="left:563px;top:696px;width:82px;height:18px;font-size:11px;line-height:15px;color:#333;font-weight:400;text-align:left;letter-spacing:0px;">[Проект]</div>
<div class="t" style="left:807px;top:696px;width:102px;height:18px;font-size:11px;line-height:15px;color:#333;font-weight:400;text-align:right;letter-spacing:0.1px;direction:rtl;">ДДДйПоказ<span style="letter-spacing:-0.18px">_СуммаСНДС</span></div>
<div class="t" style="left:912px;top:696px;width:102px;height:18px;font-size:11px;line-height:15px;color:#333;font-weight:400;text-align:right;letter-spacing:0.1px;direction:rtl;">ДДДйПоказ<span style="letter-spacing:-0.18px">_СуммаСНДС</span></div>
<div class="t" style="left:1017px;top:696px;width:102px;height:18px;font-size:11px;line-height:15px;color:#333;font-weight:400;text-align:right;letter-spacing:0.1px;direction:rtl;">ДДДйПоказ<span style="letter-spacing:-0.18px">_СуммаСНДС</span></div>
<div class="t" style="left:1122px;top:696px;width:102px;height:18px;font-size:11px;line-height:15px;color:#333;font-weight:400;text-align:right;letter-spacing:0.1px;direction:rtl;">ДДДйПоказ<span style="letter-spacing:-0.18px">_СуммаСНДС</span></div>
<div class="t" style="left:211px;top:715px;width:240px;height:14px;font-size:11px;line-height:15px;color:#3a3a3a;font-weight:700;text-align:left;letter-spacing:0.06px;">Валовая маржа</div>
<div class="t" style="left:807px;top:715px;width:102px;height:14px;font-size:11px;line-height:15px;color:#333;font-weight:400;text-align:right;letter-spacing:0.1px;direction:rtl;">ДДДМаржа<span style="letter-spacing:-0.18px">_СуммаСНДС</span></div>
<div class="t" style="left:912px;top:715px;width:102px;height:14px;font-size:11px;line-height:15px;color:#333;font-weight:400;text-align:right;letter-spacing:0.1px;direction:rtl;">ДДДМаржа<span style="letter-spacing:-0.18px">_СуммаСНДС</span></div>
<div class="t" style="left:1017px;top:715px;width:102px;height:14px;font-size:11px;line-height:15px;color:#333;font-weight:400;text-align:right;letter-spacing:0.1px;direction:rtl;">ДДДМаржа<span style="letter-spacing:-0.18px">_СуммаСНДС</span></div>
<div class="t" style="left:1122px;top:715px;width:102px;height:14px;font-size:11px;line-height:15px;color:#333;font-weight:400;text-align:right;letter-spacing:0.1px;direction:rtl;">ДДДМаржа<span style="letter-spacing:-0.18px">_СуммаСНДС</span></div>
<div class="t" style="left:456px;top:730px;width:104px;height:18px;font-size:11px;line-height:15px;color:#333;font-weight:400;text-align:left;letter-spacing:-0.12px;">[Организация]</div>
<div class="t" style="left:563px;top:730px;width:82px;height:18px;font-size:11px;line-height:15px;color:#333;font-weight:400;text-align:left;letter-spacing:0px;">[Проект]</div>
<div class="t" style="left:807px;top:730px;width:102px;height:18px;font-size:11px;line-height:15px;color:#333;font-weight:400;text-align:right;letter-spacing:0.1px;direction:rtl;">ДДДМаржа<span style="letter-spacing:-0.18px">_СуммаСНДС</span></div>
<div class="t" style="left:912px;top:730px;width:102px;height:18px;font-size:11px;line-height:15px;color:#333;font-weight:400;text-align:right;letter-spacing:0.1px;direction:rtl;">ДДДМаржа<span style="letter-spacing:-0.18px">_СуммаСНДС</span></div>
<div class="t" style="left:1017px;top:730px;width:102px;height:18px;font-size:11px;line-height:15px;color:#333;font-weight:400;text-align:right;letter-spacing:0.1px;direction:rtl;">ДДДМаржа<span style="letter-spacing:-0.18px">_СуммаСНДС</span></div>
<div class="t" style="left:1122px;top:730px;width:102px;height:18px;font-size:11px;line-height:15px;color:#333;font-weight:400;text-align:right;letter-spacing:0.1px;direction:rtl;">ДДДМаржа<span style="letter-spacing:-0.18px">_СуммаСНДС</span></div>
<div class="t" style="left:211px;top:749px;width:240px;height:14px;font-size:11px;line-height:15px;color:#3a3a3a;font-weight:700;text-align:left;letter-spacing:-0.5px;">EBITDA</div>
<div class="t" style="left:807px;top:749px;width:102px;height:14px;font-size:11px;line-height:15px;color:#333;font-weight:400;text-align:right;letter-spacing:0.1px;direction:rtl;">ДДДEBITDA<span style="letter-spacing:-0.18px">_СуммаСНДС</span></div>
<div class="t" style="left:912px;top:749px;width:102px;height:14px;font-size:11px;line-height:15px;color:#333;font-weight:400;text-align:right;letter-spacing:0.1px;direction:rtl;">ДДДEBITDA<span style="letter-spacing:-0.18px">_СуммаСНДС</span></div>
<div class="t" style="left:1017px;top:749px;width:102px;height:14px;font-size:11px;line-height:15px;color:#333;font-weight:400;text-align:right;letter-spacing:0.1px;direction:rtl;">ДДДEBITDA<span style="letter-spacing:-0.18px">_СуммаСНДС</span></div>
<div class="t" style="left:1122px;top:749px;width:102px;height:14px;font-size:11px;line-height:15px;color:#333;font-weight:400;text-align:right;letter-spacing:0.1px;direction:rtl;">ДДДEBITDA<span style="letter-spacing:-0.18px">_СуммаСНДС</span></div>
</body></html>
